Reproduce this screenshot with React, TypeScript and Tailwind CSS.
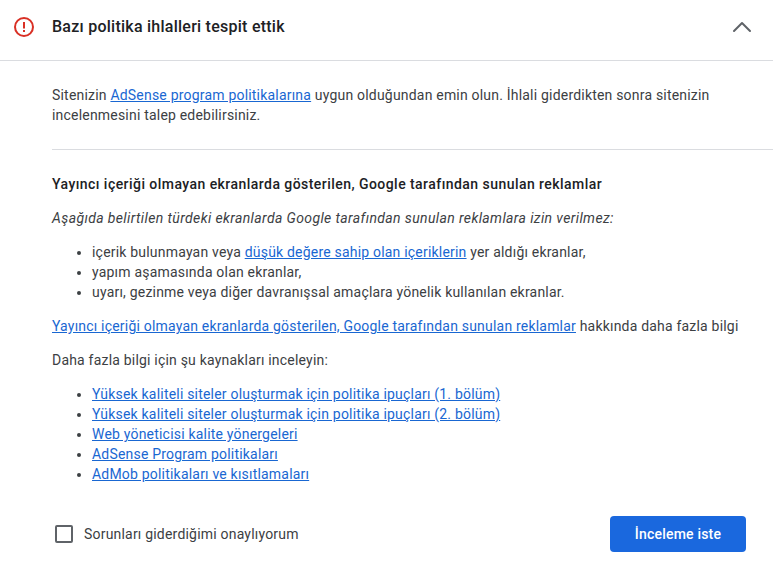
import { ChevronUp } from "lucide-react";

const A = ({ children }: { children: React.ReactNode }) => (
  <a className="text-[#1967d2] underline">{children}</a>
);

const resources = [
  "Yüksek kaliteli siteler oluşturmak için politika ipuçları (1. bölüm)",
  "Yüksek kaliteli siteler oluşturmak için politika ipuçları (2. bölüm)",
  "Web yöneticisi kalite yönergeleri",
  "AdSense Program politikaları",
  "AdMob politikaları ve kısıtlamaları",
];

export default function App() {
  return (
    <div className="h-[562px] w-[773px] overflow-hidden bg-white font-['Roboto',sans-serif] text-[14px] leading-[20px] tracking-[0.2px] text-[#3c4043]">
      <header className="flex h-[61px] items-center border-b border-[#dadce0] pl-[14px] pr-[15px]">
        <svg width="20" height="20" viewBox="0 0 20 20" className="mr-[18px] mb-[6px]">
          <circle cx="10" cy="10" r="9" fill="none" stroke="#d93025" strokeWidth="2" />
          <rect x="9" y="5" width="2" height="6.5" fill="#d93025" />
          <rect x="9" y="13" width="2" height="2" fill="#d93025" />
        </svg>
        <h1 className="mb-[6px] flex-1 text-[16px] font-medium tracking-[0.25px] text-[#202124]">
          Bazı politika ihlalleri tespit ettik
        </h1>
        <ChevronUp size={32} strokeWidth={1.5} className="mb-[6px] text-[#5f6368]" />
      </header>

      <div className="pl-[52px]">
        <p className="mt-[24px] pr-[60px]">
          Sitenizin <A>AdSense program politikalarına</A> uygun olduğundan emin olun. İhlali giderdikten sonra sitenizin
          incelenmesini talep edebilirsiniz.
        </p>
        <div className="mt-[24px] border-t border-[#dadce0]" />
        <h2 className="mt-[24px] font-medium tracking-[0.45px] text-[#202124]">
          Yayıncı içeriği olmayan ekranlarda gösterilen, Google tarafından sunulan reklamlar
        </h2>
        <p className="mt-[14px] italic tracking-[0.38px]">
          Aşağıda belirtilen türdeki ekranlarda Google tarafından sunulan reklamlara izin verilmez:
        </p>
        <ul className="mt-[14px] list-disc pl-[40px]">
          <li>
            içerik bulunmayan veya <A>düşük değere sahip olan içeriklerin</A> yer aldığı ekranlar,
          </li>
          <li>yapım aşamasında olan ekranlar,</li>
          <li>uyarı, gezinme veya diğer davranışsal amaçlara yönelik kullanılan ekranlar.</li>
        </ul>
        <p className="mt-[14px]">
          <A>Yayıncı içeriği olmayan ekranlarda gösterilen, Google tarafından sunulan reklamlar</A> hakkında daha fazla bilgi
        </p>
        <p className="mt-[14px]">Daha fazla bilgi için şu kaynakları inceleyin:</p>
        <ul className="mt-[14px] list-disc pl-[40px]">
          {resources.map((r) => (
            <li key={r}>
              <A>{r}</A>
            </li>
          ))}
        </ul>
      </div>

      <footer className="mt-[32px] flex items-center justify-between pl-[55px] pr-[27px]">
        <label className="flex items-center">
          <span className="h-[18px] w-[18px] rounded-[2px] border-2 border-[#5f6368]" />
          <span className="ml-[11px]">Sorunları giderdiğimi onaylıyorum</span>
        </label>
        <button className="h-[36px] w-[136px] rounded-[4px] bg-[#1a68de] font-medium text-white">İnceleme iste</button>
      </footer>
    </div>
  );
}
